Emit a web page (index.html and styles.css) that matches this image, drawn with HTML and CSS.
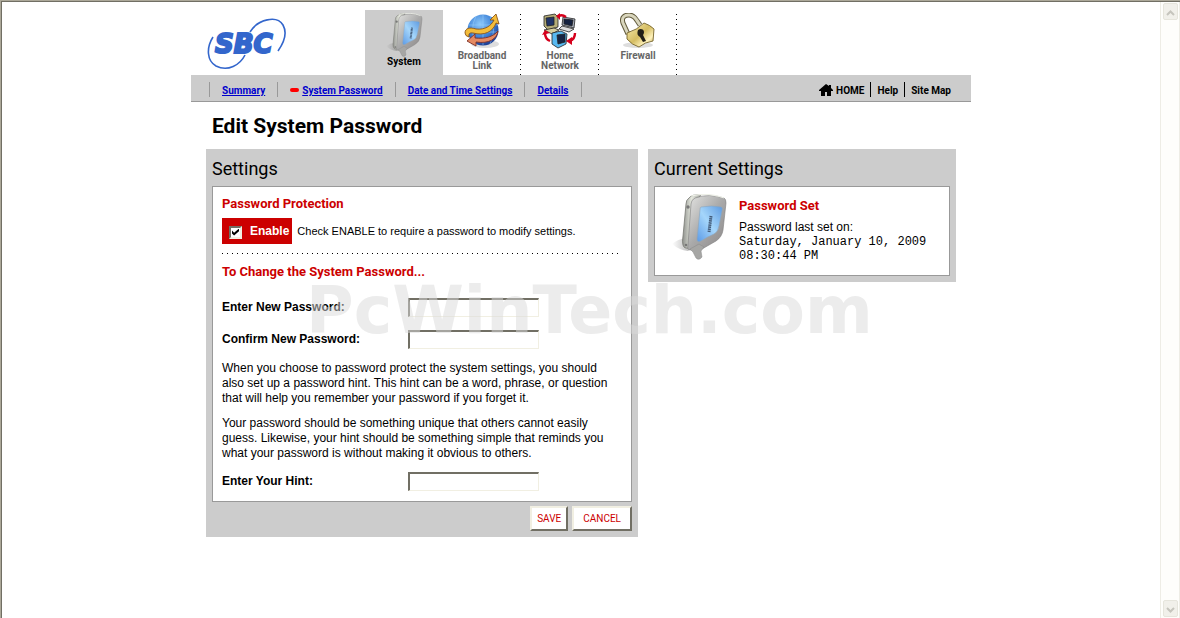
FILE: index.html
```html
<!DOCTYPE html>
<html lang="en">
<head>
    <meta charset="utf-8">
    <title>Edit System Password</title>
    <link rel="stylesheet" href="styles.css">
</head>
<body>
<svg class="defs" aria-hidden="true">
    <defs>
        <linearGradient id="shell" x1="0" y1="0" x2="1" y2="1">
            <stop offset="0" stop-color="#e4e4e2"/>
            <stop offset=".5" stop-color="#a9a9a9"/>
            <stop offset="1" stop-color="#8c8888"/>
        </linearGradient>
        <linearGradient id="side" x1="0" y1="0" x2="1" y2="0">
            <stop offset="0" stop-color="#8f918d"/>
            <stop offset=".5" stop-color="#e6e9df"/>
            <stop offset="1" stop-color="#a5a7a2"/>
        </linearGradient>
        <linearGradient id="screen" x1="1" y1="0" x2="0" y2="1">
            <stop offset="0" stop-color="#5d9ae0"/>
            <stop offset=".5" stop-color="#a5d6fb"/>
            <stop offset="1" stop-color="#5b9ae6"/>
        </linearGradient>
        <radialGradient id="globe" cx=".4" cy=".3" r=".7">
            <stop offset="0" stop-color="#8cc8fa"/>
            <stop offset=".6" stop-color="#3f83d8"/>
            <stop offset="1" stop-color="#1d3f94"/>
        </radialGradient>
        <linearGradient id="gold" x1="0" y1="0" x2="1" y2="1">
            <stop offset="0" stop-color="#f8edb4"/>
            <stop offset=".5" stop-color="#d5bd62"/>
            <stop offset=".75" stop-color="#fff3bd"/>
            <stop offset="1" stop-color="#a88a2e"/>
        </linearGradient>
        <linearGradient id="shade" x1="0" y1="0" x2="1" y2="0">
            <stop offset="0" stop-color="#777" stop-opacity="0"/>
            <stop offset="1" stop-color="#777" stop-opacity=".6"/>
        </linearGradient>
        <symbol id="modem" viewBox="0 0 56 66">
            <path d="M1 50q7-6 16-5l5 8-5 4Q8 56 1 50z" fill="url(#shade)"/>
            <path d="M18 4Q21 0 30 1l-9 10-3 43q-5 1-6-3-1-3 0-9l3-32q0-4 3-6z" fill="url(#side)" stroke="#777972" stroke-width=".8"/>
            <path d="M24 4Q38-1 53 4q2 1 2 5l-3 27q-1 7-7 11l-14 8-12 1q-3 0-2-5l3-41q0-4 4-6z" fill="url(#shell)" stroke="#7d7d7d" stroke-width=".6"/>
            <path d="M20 2Q38-2 53 4" fill="none" stroke="#eef0e8" stroke-width="1.2"/>
            <path d="M30 13q11-2 20 0 2 0 1 4l-3 15q-1 6-5 8-7 3-13 7-4 2-4-2l3-29q0-3 1-3z" fill="url(#screen)" stroke="#8fa4b8" stroke-width=".6"/>
            <path d="M40 22l-2 16" stroke="#425a78" stroke-width="3" stroke-dasharray="1.500 .6"/>
            <path d="M19 55l9-5 5 3-3 4 1 6q-3 4-6 1l-3-6z" fill="#a6a6a4" stroke="#888" stroke-width=".5"/>
            <circle cx="17" cy="13" r="1.700" fill="#777"/>
            <circle cx="15" cy="51" r="1.300" fill="#777"/>
        </symbol>
    </defs>
</svg>

<div class="window">
    <div class="page">
        <header class="header">
            <a class="logo" href="#" aria-label="SBC">
                <svg width="80" height="52" viewBox="0 0 80 52">
                    <g fill="none" stroke="#3366cc" stroke-width="1.6">
                        <path d="M43 14C51 1 70-3 76 7c5 9 0 19-5 26"/>
                        <path d="M6 19C-1 30 0 43 9 48c12 6 24-1 29-11"/>
                    </g>
                    <text class="logo-text" x="8" y="35">SBC</text>
                </svg>
            </a>
            <nav class="tabs">
                <a class="tab active" href="#">
                    <svg width="38" height="44"><use href="#modem"/></svg>
                    <span>System</span>
                </a>
                <a class="tab" href="#">
                    <svg width="36" height="36" viewBox="0 0 36 36">
                        <ellipse cx="21" cy="31" rx="14" ry="4" fill="#ddd"/>
                        <circle cx="19" cy="17" r="15.5" fill="url(#globe)"/>
                        <path d="M5 12h28M4 19h30M19 2v30M12 3q-7 14 0 28M26 3q7 14 0 28" fill="none" stroke="#9bd0ff" stroke-width=".5"/>
                        <path d="M1 20c0-5 5-6 11-4 9 1 15-3 18-9l-4 0 6-6 3 10-3-1C29 19 20 23 9 20q-5-1-4 4-4-1-4-4z" fill="#f4bd3a" stroke="#8b5519" stroke-width=".9"/>
                        <path d="M3 28l8-7v4c10 1 18-1 23-7-1 8-9 13-22 11v4z" fill="#e58a62" stroke="#7d3028" stroke-width=".9"/>
                    </svg>
                    <span>Broadband Link</span>
                </a>
                <a class="tab" href="#">
                    <svg width="36" height="36" viewBox="0 0 36 36">
                        <g stroke="#222" stroke-width=".8">
                            <path d="M2 3l11-2 3 3v10l-10 3-4-4z" fill="#b5ad78"/>
                            <path d="M4 5l8-1v8l-7 1z" fill="#203468"/>
                            <path d="M2 17l10-2 5 2-7 4z" fill="#d6cfa0"/>
                            <path d="M21 4l12 2-1 9-12-3z" fill="#a9b0bd"/>
                            <path d="M22 6l9 1-1 6-8-2z" fill="#14213f"/>
                            <path d="M20 13l12 3-5 3-10-3z" fill="#ddd"/>
                            <path d="M10 20l9-2 6 3-1 10-8 4-6-4z" fill="#58b9f1"/>
                            <path d="M15 22l8-1v8l-7 2z" fill="#172442"/>
                        </g>
                        <path d="M17 3q3-2 7 1M3 20q0 6 5 8M33 20q0 6-5 8" fill="none" stroke="#d6001c" stroke-width="2.4"/>
                        <path d="M18 0v7l-4-4zM0 22l3-5 5 3zM30 24v8l-6-4z" fill="#d6001c"/>
                    </svg>
                    <span>Home Network</span>
                </a>
                <a class="tab" href="#">
                    <svg width="36" height="36" viewBox="0 0 36 36">
                        <ellipse cx="18" cy="32" rx="15" ry="3" fill="#ddd"/>
                        <path d="M8 21L3 10C1 4 5 2 9 2c5 0 7 4 11 10" fill="none" stroke="#625b3d" stroke-width="5"/>
                        <path d="M8 21L3 10C1 4 5 2 9 2c5 0 7 4 11 10" fill="none" stroke="#d9d6bd" stroke-width="3"/>
                        <path d="M7 20Q17 17 24 10q6 2 10 6l-1 12q-8 1-14 6-7-2-12-8z" fill="url(#gold)" stroke="#75632a" stroke-width=".9"/>
                        <path d="M18 17c4-3 8 1 5 5l3 6-3 1-3-5q-4-2-2-7z" fill="#221f17"/>
                    </svg>
                    <span>Firewall</span>
                </a>
            </nav>
        </header>

        <div class="subnav">
            <nav class="links">
                <a href="#">Summary</a>
                <a class="current" href="#">System Password</a>
                <a href="#">Date and Time Settings</a>
                <a href="#">Details</a>
            </nav>
            <nav class="tools">
                <a href="#">
                    <svg width="14" height="12" viewBox="0 0 14 12"><path d="M7 0l3 2V1h2v3l2 2v1h-2v5H8V8H6v4H2V7H0V6z"/></svg>HOME
                </a>
                <a href="#">Help</a>
                <a href="#">Site Map</a>
            </nav>
        </div>

        <main class="content">
            <h1>Edit System Password</h1>
            <div class="columns">
                <form class="panel" onsubmit="return false">
                    <h2>Settings</h2>
                    <div class="box settings">
                        <h3>Password Protection</h3>
                        <div class="enable-row">
                            <label class="enable"><input type="checkbox" checked> Enable</label>
                            <span>Check ENABLE to require a password to modify settings.</span>
                        </div>
                        <h3>To Change the System Password...</h3>
                        <div class="field">
                            <label for="new-password">Enter New Password:</label>
                            <input type="password" id="new-password">
                        </div>
                        <div class="field">
                            <label for="confirm-password">Confirm New Password:</label>
                            <input type="password" id="confirm-password">
                        </div>
                        <p>When you choose to password protect the system settings, you should also set up a password hint. This hint can be a word, phrase, or question that will help you remember your password if you forget it.</p>
                        <p>Your password should be something unique that others cannot easily guess. Likewise, your hint should be something simple that reminds you what your password is without making it obvious to others.</p>
                        <div class="field">
                            <label for="hint">Enter Your Hint:</label>
                            <input type="text" id="hint">
                        </div>
                    </div>
                    <div class="buttons">
                        <button type="submit">SAVE</button>
                        <button type="button">CANCEL</button>
                    </div>
                </form>

                <section class="panel">
                    <h2>Current Settings</h2>
                    <div class="box status">
                        <svg width="56" height="66"><use href="#modem"/></svg>
                        <div>
                            <h3>Password Set</h3>
                            <div>Password last set on:</div>
                            <div class="date">Saturday, January 10, 2009 08:30:44 PM</div>
                        </div>
                    </div>
                </section>
            </div>
        </main>
        <div class="watermark">PcWinTech.com</div>
    </div>

    <div class="scrollbar">
        <button type="button" aria-label="Scroll up"><svg width="9" height="6"><path d="M1 5l3.500-3.500L8 5"/></svg></button>
        <button type="button" aria-label="Scroll down"><svg width="9" height="6"><path d="M1 1l3.500 3.500L8 1"/></svg></button>
    </div>
</div>
</body>
</html>
```
FILE: styles.css
```css
* {
    box-sizing: border-box;
}

body {
    margin: 0;
    background-color: white;
    color: black;
    font-family: "Liberation Sans", Arial, sans-serif;
    font-size: 12px;
    line-height: 15px;
}

h1, h2, h3, p {
    margin: 0;
}

a {
    color: black;
    text-decoration: none;
}

.defs {
    position: absolute;
    width: 0;
    height: 0;
}

.window {
    display: flex;
    min-height: 100vh;
    padding: 1px 0 0 1px;
    border-top: 1px solid #aca899;
    border-left: 1px solid #aca899;
    box-shadow: inset 1px 1px #716f64;
}

.page {
    position: relative;
    flex: 1;
    max-width: 780px;
    margin: 0 auto;
    padding-top: 8px;
}

/* header */
.header {
    display: flex;
    height: 65px;
}

.logo {
    width: 174px;
    padding: 8px 0 0 16px;
}

.logo-text {
    font-family: "DejaVu Sans", Verdana, sans-serif;
    font-size: 26px;
    font-weight: bold;
    font-style: italic;
    fill: #3366cc;
    stroke: #3366cc;
    stroke-width: 2px;
}

.tabs {
    display: flex;
}

.tab {
    display: flex;
    flex-direction: column;
    align-items: center;
    width: 78px;
    padding: 3px 8px 0;
    color: #666;
    font-family: Roboto, "Arial Narrow", sans-serif;
    font-size: 10px;
    font-weight: bold;
    line-height: 10px;
    text-align: center;
    background: repeating-linear-gradient(#000 0 1px, transparent 1px 5px) right 4px / 1px 100% no-repeat;
}

.tab svg {
    flex-shrink: 0;
}

.tab span {
    margin-top: 2px;
}

.tab.active {
    background: #ccc;
    color: black;
}

.tab.active span {
    margin-top: 0;
}

/* grey bar below the tabs */
.subnav {
    display: flex;
    justify-content: space-between;
    height: 27px;
    padding: 7px 15px 0 18px;
    background-color: #ccc;
    border-bottom: 1px solid #999;
    font-family: Roboto, "Arial Narrow", sans-serif;
    font-size: 10px;
    font-weight: bold;
    line-height: 18px;
}

.links, .tools {
    display: flex;
    height: 15px;
}

.links {
    border-right: 1px solid #999;
}

.links a {
    padding: 0 12px;
    border-left: 1px solid #999;
    color: #0000cc;
    text-decoration: underline;
}

.links .current::before {
    content: "";
    display: inline-block;
    width: 9px;
    height: 4px;
    margin-right: 3px;
    border-radius: 2px;
    background-color: red;
    vertical-align: 2px;
}

.tools a {
    padding: 0 6px;
}

.tools a:last-child {
    padding-right: 5px;
}

.tools a + a {
    border-left: 1px solid black;
}

.tools svg {
    margin-right: 3px;
    vertical-align: -2px;
}

/* content */
.content {
    padding: 10px 15px 0;
}

h1 {
    padding-left: 6px;
    font-family: Roboto, "Arial Narrow", sans-serif;
    font-size: 21px;
    line-height: 28px;
}

h2 {
    padding-top: 1px;
    font-family: Roboto, "Arial Narrow", sans-serif;
    font-size: 18px;
    font-weight: normal;
    line-height: 28px;
    margin-bottom: 3px;
}

h3 {
    color: #cc0000;
    font-family: Roboto, "Arial Narrow", sans-serif;
    font-size: 13px;
    line-height: 16px;
}

.columns {
    display: grid;
    grid-template-columns: 432fr 308fr;
    gap: 10px;
    align-items: start;
    margin-top: 9px;
}

.panel {
    padding: 5px 6px 6px;
    background-color: #ccc;
}

.box {
    background-color: white;
    border: 1px solid #999;
}

.settings {
    padding: 9px 9px 10px;
}

.enable-row {
    display: flex;
    align-items: center;
    gap: 5px;
    margin-top: 6px;
    margin-bottom: 10px;
    padding-bottom: 10px;
    background: repeating-linear-gradient(90deg, #000 0 1px, transparent 1px 5px) left bottom / 397px 1px no-repeat;
    font-size: 11px;
}

.enable {
    display: flex;
    align-items: center;
    gap: 8px;
    height: 26px;
    padding: 0 3px 0 7px;
    background-color: #cc0000;
    color: white;
    font-size: 12px;
    font-weight: bold;
}

.enable input {
    appearance: none;
    display: grid;
    place-items: center;
    width: 13px;
    height: 13px;
    margin: 2px 0 0;
    background-color: white;
    border: 2px solid;
    border-color: #716f64 #f1efe2 #f1efe2 #716f64;
}

.enable input:checked::before {
    content: "";
    width: 7px;
    height: 7px;
    background-color: black;
    clip-path: polygon(0 30%, 30% 60%, 100% 0, 100% 40%, 30% 100%, 0 70%);
}

.field {
    display: flex;
    align-items: center;
    height: 20px;
    margin-top: 12px;
    font-weight: bold;
}

h3 + .field {
    margin-top: 17px;
}

.field label {
    width: 186px;
}

.field input {
    width: 131px;
    height: 19px;
    padding: 1px 2px;
    border: 1px solid #f1efe2;
    border-top: 2px solid #716f64;
    border-left: 2px solid #716f64;
    font-family: inherit;
    font-size: 12px;
}

p {
    margin-top: 10px;
}

.field + p {
    margin-top: 12px;
}

p + .field {
    margin-top: 10px;
}

.buttons {
    display: flex;
    justify-content: flex-end;
    gap: 4px;
    padding-top: 4px;
}

.buttons button {
    height: 25px;
    padding: 0 5px;
    background-color: white;
    border: 2px solid;
    border-color: #f1efe2 #716f64 #716f64 #f1efe2;
    color: #cc0000;
    font-family: Roboto, "Arial Narrow", sans-serif;
    font-size: 10px;
}

.buttons button + button {
    padding: 0 9px;
}

.status {
    display: flex;
    gap: 12px;
    height: 90px;
    padding: 7px 10px 0 16px;
}

.status svg {
    flex-shrink: 0;
}

.status h3 {
    margin: 4px 0 6px;
}

.date {
    font-family: "Liberation Mono", "Courier New", monospace;
    font-size: 12px;
    line-height: 14px;
}

.watermark {
    position: absolute;
    top: 271px;
    left: 115px;
    color: rgba(217, 217, 217, 0.5);
    font-family: "DejaVu Sans", Verdana, sans-serif;
    font-size: 65px;
    font-weight: bold;
    line-height: 75px;
    pointer-events: none;
}

/* scroll bar */
.scrollbar {
    display: flex;
    flex-direction: column;
    justify-content: space-between;
    width: 20px;
    padding: 1px 1px 1px 2px;
    background-color: #fefefb;
    border-left: 1px solid #eeede5;
    border-right: 1px solid #eeede5;
}

.scrollbar button {
    width: 15px;
    height: 17px;
    padding: 0;
    background-color: #f1f0ea;
    border: 1px solid #e6e5dc;
    border-radius: 2px;
    line-height: 10px;
}

.scrollbar path {
    fill: none;
    stroke: #c6c5bd;
    stroke-width: 2;
}
```
